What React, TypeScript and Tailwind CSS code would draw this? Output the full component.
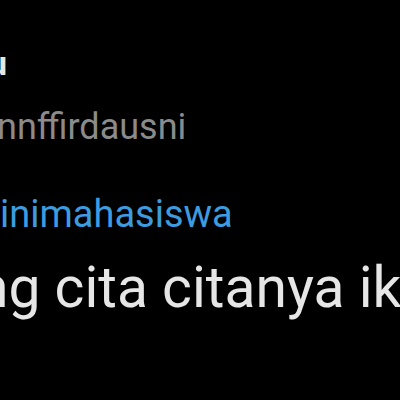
export default function App() {
  return (
    <div
      className="h-[400px] w-[400px] overflow-hidden bg-black pt-[46px]"
      style={{ fontFamily: 'Roboto, "Noto Sans", sans-serif' }}
    >
      <div className="ml-[-12px] whitespace-nowrap text-[34px] font-bold leading-[34px] text-[#e7e7e7]">
        u
      </div>
      <div className="ml-[-3px] mt-[29px] whitespace-nowrap text-[36px] leading-[36px] text-[#8b8b8b]">
        nnffirdausni
      </div>
      <div className="ml-0 mt-[50px] whitespace-nowrap text-[38px] leading-[38px] text-[#3d9ce0]">
        inimahasiswa
      </div>
      <div className="ml-[-23px] mt-[26px] whitespace-nowrap text-[57px] leading-[57px] text-[#e6e6e6]">
        ng cita citanya ikut
      </div>
    </div>
  );
}
